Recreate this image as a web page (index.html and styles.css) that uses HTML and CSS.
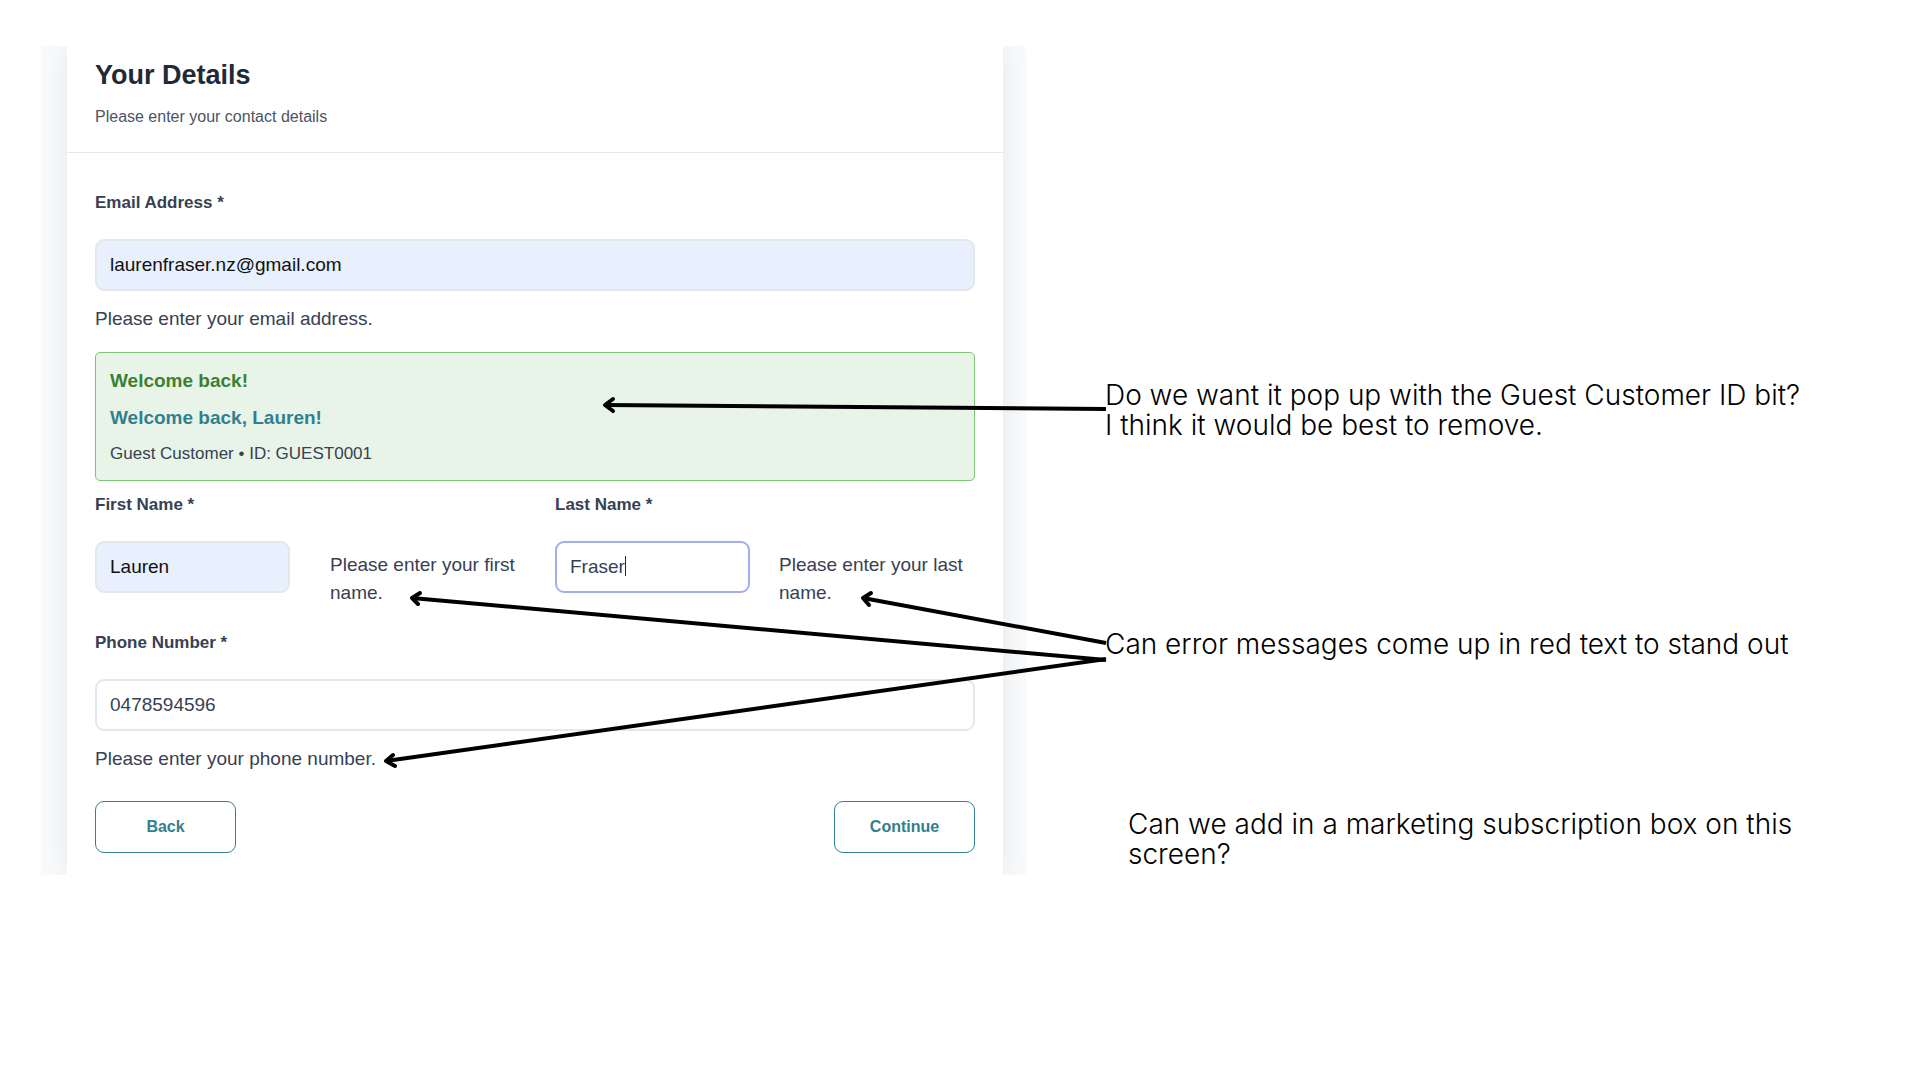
FILE: index.html
```html
<!DOCTYPE html>
<html lang="en">
<head>
<meta charset="utf-8">
<meta name="viewport" content="width=device-width, initial-scale=1">
<title>Your Details – review notes</title>
<link rel="stylesheet" href="styles.css">
</head>
<body>
<main class="board">
  <section class="screen">
    <div class="card">
      <header class="card-header">
        <h1>Your Details</h1>
        <p>Please enter your contact details</p>
      </header>
      <form class="details">
        <label class="label" for="email">Email Address *</label>
        <input class="field filled" id="email" type="email" value="laurenfraser.nz@gmail.com">
        <p class="hint">Please enter your email address.</p>

        <div class="welcome">
          <strong class="welcome-title">Welcome back!</strong>
          <strong class="welcome-name">Welcome back, Lauren!</strong>
          <span class="welcome-meta">Guest Customer • ID: GUEST0001</span>
        </div>

        <div class="names">
          <div>
            <label class="label" for="first">First Name *</label>
            <div class="name-row">
              <input class="field filled" id="first" type="text" value="Lauren">
              <p class="side-hint">Please enter your first name.</p>
            </div>
          </div>
          <div>
            <label class="label" for="last">Last Name *</label>
            <div class="name-row name-row-last">
              <div class="focus-wrap">
                <input class="field focused" id="last" type="text" value="Fraser">
                <span class="caret"></span>
              </div>
              <p class="side-hint">Please enter your last name.</p>
            </div>
          </div>
        </div>

        <label class="label" for="phone">Phone Number *</label>
        <input class="field" id="phone" type="tel" value="0478594596">
        <p class="hint">Please enter your phone number.</p>

        <div class="actions">
          <button class="button" type="button">Back</button>
          <button class="button" type="button">Continue</button>
        </div>
      </form>
    </div>
  </section>

  <aside class="notes">
    <p class="note note-guest">Do we want it pop up with the Guest Customer ID bit?<br>I think it would be best to remove.</p>
    <p class="note note-errors">Can error messages come up in red text to stand out</p>
    <p class="note note-marketing">Can we add in a marketing subscription box on this<br>screen?</p>
  </aside>

  <svg class="arrows" viewBox="0 0 1920 1080" aria-hidden="true">
    <g class="shafts">
      <path d="M1106 409L605 405"/>
      <path d="M1106 660L412 598"/>
      <path d="M1106 643L863 598"/>
      <path d="M1106 659L386 761"/>
    </g>
    <g class="heads">
      <path d="M613 399L605 405L613 411"/>
      <path d="M420 593L412 598L418 604"/>
      <path d="M871 593L863 598L869 605"/>
      <path d="M393 755L386 761L395 766"/>
    </g>
  </svg>
</main>
</body>
</html>
```
FILE: styles.css
```css
* {
  box-sizing: border-box;
}

body {
  margin: 0;
  background: #fff;
  color: #374151;
  font-family: "Liberation Sans", Arial, sans-serif;
  font-size: 19px;
  line-height: 28px;
}

h1,
p {
  margin: 0;
}

.board {
  position: relative;
  display: grid;
  grid-template-columns: 985fr 853fr;
  align-items: start;
  padding: 46px 41px;
}

.screen {
  overflow: hidden;
  padding: 0 23px 0 26px;
  background: #f9fafc;
}

.card {
  background: #fff;
  box-shadow: 0 0 28px rgba(0, 0, 0, 0.08);
}

.card-header {
  padding: 12px 28px 21px;
  border-bottom: 1px solid #e5e7eb;
}

.card-header h1 {
  color: #1f2937;
  font-size: 27px;
  line-height: 34px;
}

.card-header p {
  margin-top: 11px;
  color: #4b5563;
  font-size: 16px;
}

.details {
  padding: 36px 28px 22px;
}

.label {
  display: block;
  margin-bottom: 22px;
  font-size: 17px;
  font-weight: 700;
}

.field {
  display: block;
  width: 100%;
  height: 52px;
  padding: 0 13px;
  border: 2px solid #e5e7eb;
  border-radius: 9px;
  background: #fff;
  color: #374151;
  font: inherit;
  outline: none;
}

.filled {
  background: #e8effd;
  color: #111;
}

.focused {
  border-color: #a5acf0;
}

.hint {
  margin-top: 14px;
}

.welcome {
  display: flex;
  flex-direction: column;
  margin-top: 19px;
  padding: 14px 14px 12px;
  border: 1px solid #7cc576;
  border-radius: 5px;
  background: #e8f4e8;
}

.welcome-title {
  color: #3c8031;
}

.welcome-name {
  margin-top: 9px;
  color: #31808f;
}

.welcome-meta {
  margin-top: 8px;
  font-size: 17px;
}

.names {
  display: grid;
  grid-template-columns: 430fr 420fr;
  gap: 30px;
  margin: 10px 0 22px;
}

.name-row {
  display: grid;
  grid-template-columns: 195px 1fr;
  gap: 40px;
}

.name-row-last {
  gap: 29px;
}

.side-hint {
  padding-top: 10px;
}

.focus-wrap {
  position: relative;
}

.caret {
  position: absolute;
  top: 15px;
  left: 70px;
  width: 1px;
  height: 20px;
  background: #1f2937;
}

.actions {
  display: flex;
  justify-content: space-between;
  margin-top: 28px;
}

.button {
  width: 141px;
  height: 52px;
  border: 1px solid #31808f;
  border-radius: 9px;
  background: #fff;
  color: #31808f;
  font: inherit;
  font-size: 16px;
  font-weight: 700;
}

.notes {
  padding: 334px 0 0 79px;
  color: #000;
  font-family: Inter, "Open Sans", sans-serif;
  font-size: 28px;
  font-weight: 300;
  line-height: 30px;
}

.note-errors {
  margin-top: 189px;
}

.note-marketing {
  margin-top: 150px;
  padding-left: 23px;
}

.arrows {
  position: absolute;
  top: 0;
  left: 0;
  width: 100%;
  pointer-events: none;
  fill: none;
  stroke: #000;
  stroke-width: 4;
}

.heads {
  stroke-linecap: round;
  stroke-linejoin: round;
}
```
